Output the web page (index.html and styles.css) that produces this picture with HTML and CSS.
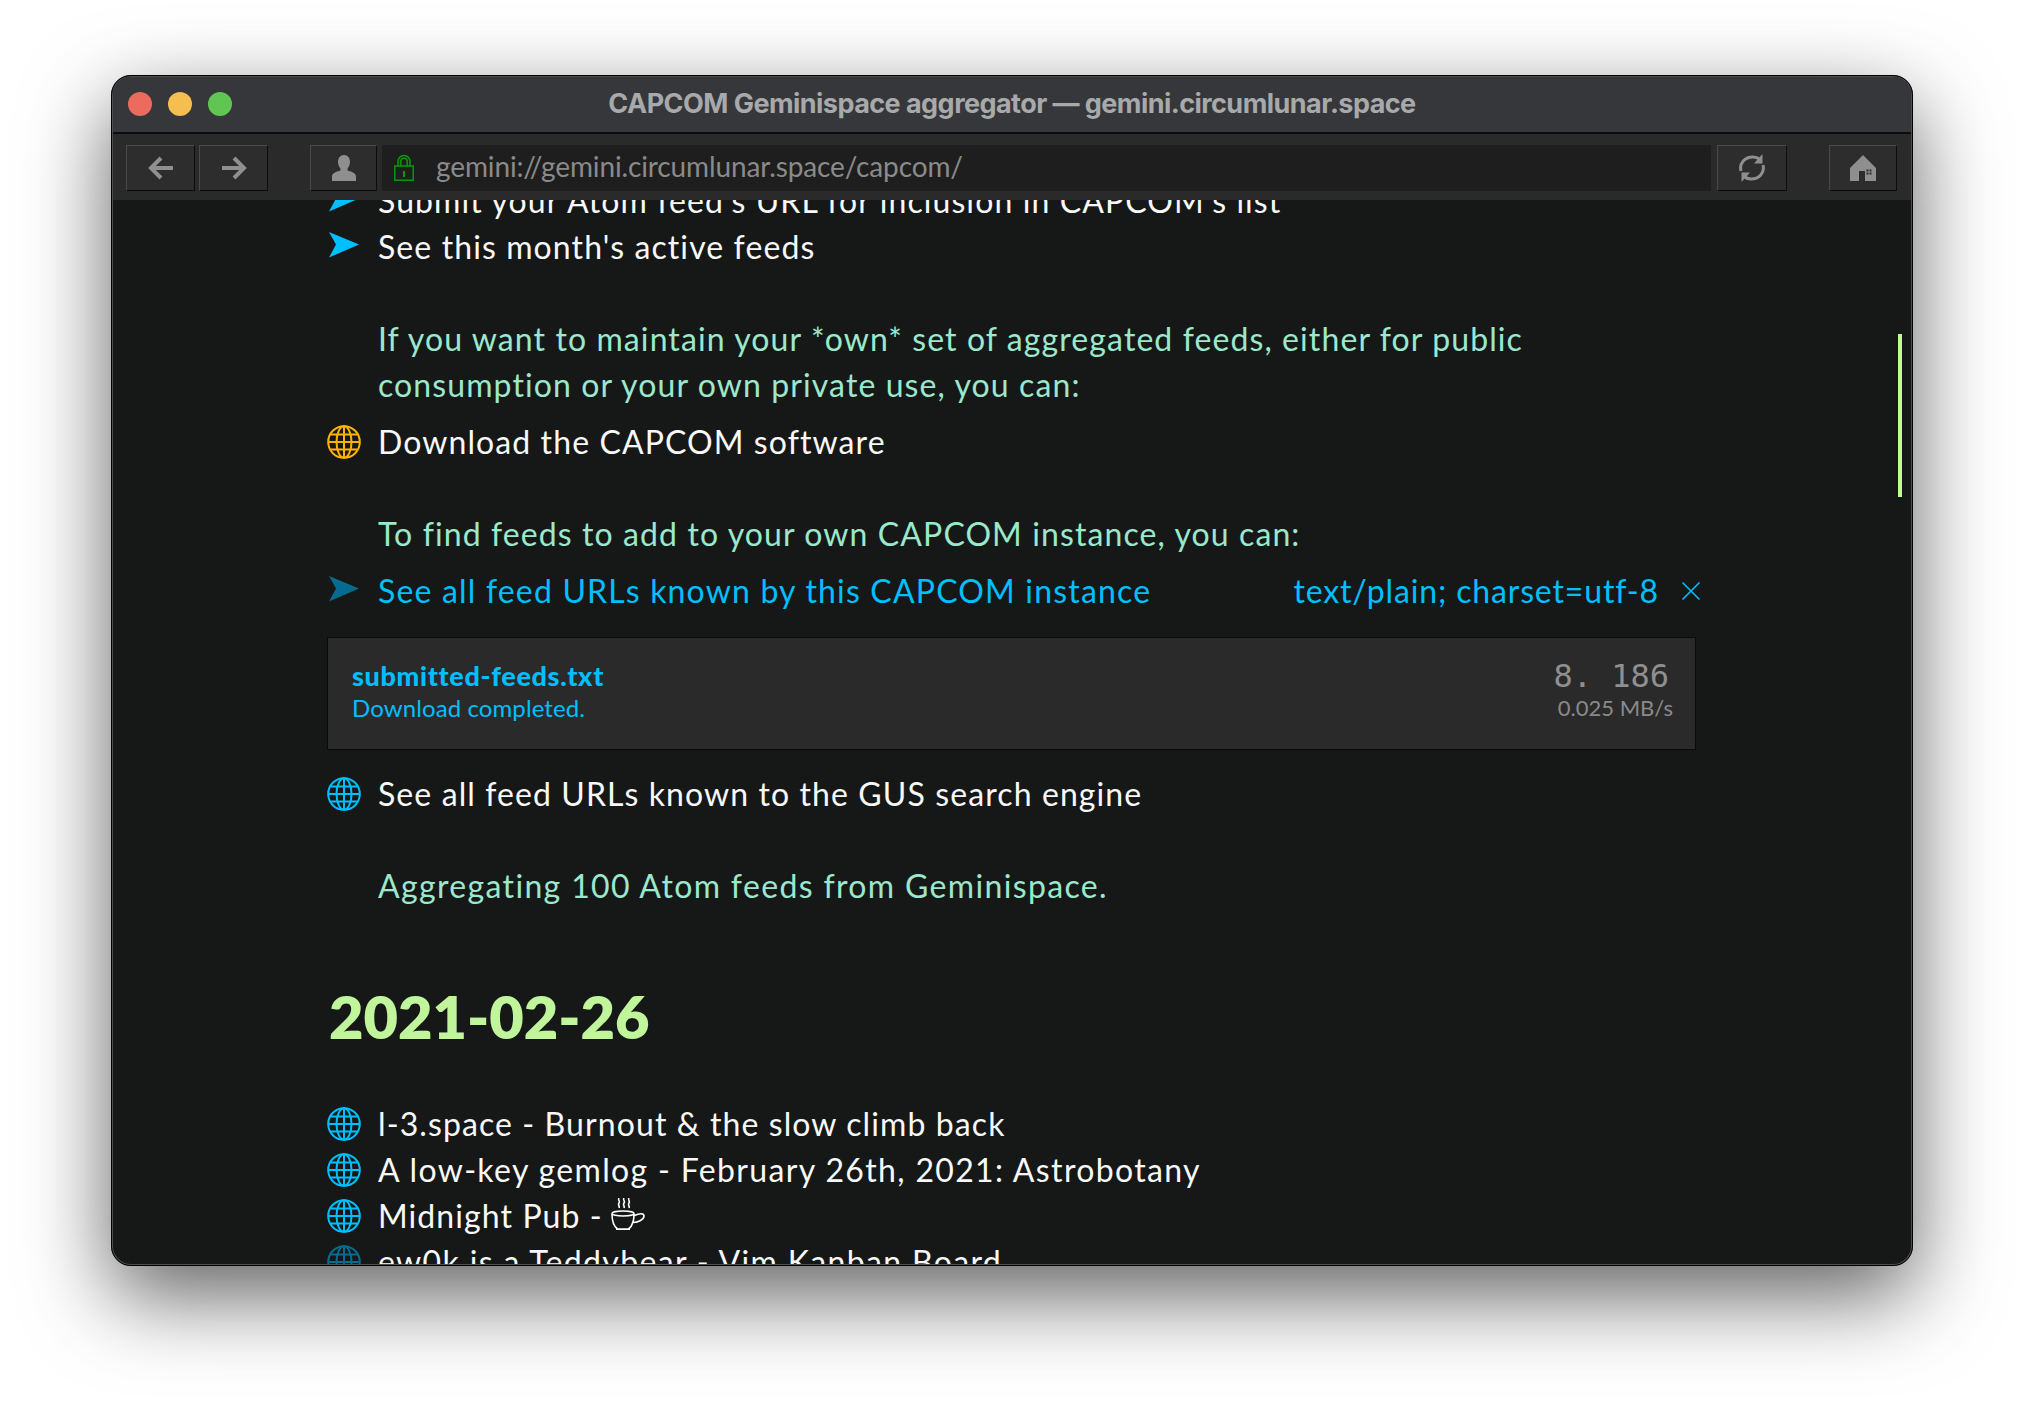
FILE: index.html
```html
<!DOCTYPE html>
<html lang="en">
<head>
<meta charset="utf-8">
<title>CAPCOM Geminispace aggregator — gemini.circumlunar.space</title>
<link rel="stylesheet" href="styles.css">
</head>
<body>
<svg class="defs" width="0" height="0" aria-hidden="true">
  <symbol id="globe" viewBox="0 0 34 34">
    <g fill="none" stroke="currentColor" stroke-width="2">
      <circle cx="17" cy="17" r="15.8"/>
      <ellipse cx="17" cy="17" rx="7.5" ry="15.8"/>
      <path d="M17 1v32M1.2 17h31.6M3.6 9.5h26.8M3.6 24.5h26.8"/>
    </g>
  </symbol>
  <symbol id="plane" viewBox="0 0 30 26">
    <path fill="currentColor" d="M0 0 30 12.5 0 25.5 7 12.5Z"/>
  </symbol>
</svg>
<div class="window">
  <header class="titlebar">
    <div class="lights"><i class="light red"></i><i class="light yellow"></i><i class="light green"></i></div>
    <div class="title">CAPCOM Geminispace aggregator — gemini.circumlunar.space</div>
  </header>
  <nav class="toolbar">
    <div class="btn nav-btn"><svg width="26" height="24" viewBox="0 0 26 24"><path fill="none" stroke="#8f8f8f" stroke-width="4" d="M25 12H4M13 2 3 12l10 10"/></svg></div>
    <div class="btn nav-btn"><svg width="26" height="24" viewBox="0 0 26 24"><path fill="none" stroke="#8f8f8f" stroke-width="4" d="M1 12h21M13 2l10 10-10 10"/></svg></div>
    <div class="btn id-btn"><svg width="24" height="26" viewBox="0 0 24 26"><path fill="#8f8f8f" d="M12 0c3.800 0 6 3 6 6.800 0 3-1 5-2.400 6.500v2.200c3 1 8.400 2.200 8.400 6V26H0v-4.500c0-3.800 5.400-5 8.400-6v-2.200C7 11.800 6 9.800 6 6.800 6 3 8.200 0 12 0Z"/></svg></div>
    <div class="address">
      <svg width="20" height="26" viewBox="0 0 20 26"><g fill="none" stroke="#0a9a0a" stroke-width="1.500"><rect x=".8" y="11" width="18.400" height="14.200"/><path d="M4 11V6.500a6 6 0 0 1 12 0V11M6.800 11V6.500a3.200 3.200 0 0 1 6.400 0V11"/></g><path fill="#0a9a0a" d="M9 16h2v6H9z"/></svg>
      <span class="url">gemini://gemini.circumlunar.space/capcom/</span>
    </div>
    <div class="btn reload-btn"><svg width="28" height="28" viewBox="0 0 28 28"><g fill="none" stroke="#8f8f8f" stroke-width="3"><path d="M3 17C1 9 7 3 15 3c3 0 5 .8 7 2.500"/><path d="M25 11c2 8-4 14-12 14-3 0-5-.8-7-2.500"/></g><path fill="#8f8f8f" d="M24.500 0v9.500H16zM3.500 28v-9.500H12z"/></svg></div>
    <div class="btn home-btn"><svg width="26" height="26" viewBox="0 0 26 26"><path fill="#8f8f8f" d="M13 0 26 13v13H15V16H9v10H0V13Z"/><path fill="#2d2d2d" d="M16.500 14.500h2v2h-2zM19.500 14.500h2v2h-2zM16.500 17.500h2v2h-2zM19.500 17.500h2v2h-2z"/></svg></div>
  </nav>
  <main class="content">
    <div class="doc">
      <div class="row"><svg class="ic plane link"><use href="#plane"/></svg><span>Submit your Atom feed's URL for inclusion in CAPCOM's list</span></div>
      <div class="row"><svg class="ic plane link"><use href="#plane"/></svg><span>See this month's active feeds</span></div>
      <div class="blank"></div>
      <p class="para">If you want to maintain your *own* set of aggregated feeds, either for public<br>consumption or your own private use, you can:</p>
      <div class="row gap"><svg class="ic globe gold"><use href="#globe"/></svg><span>Download the CAPCOM software</span></div>
      <div class="blank"></div>
      <p class="para">To find feeds to add to your own CAPCOM instance, you can:</p>
      <div class="row gap active">
        <svg class="ic plane dim"><use href="#plane"/></svg>
        <span class="grow">See all feed URLs known by this CAPCOM instance</span>
        <span class="mime">text/plain; charset=utf-8</span>
        <svg class="close" width="20" height="20" viewBox="0 0 20 20"><path fill="none" stroke="currentColor" stroke-width="1.600" d="M1.500 1.500l17 17M18.500 1.500l-17 17"/></svg>
      </div>
      <section class="download">
        <div class="dl-left">
          <div class="dl-name">submitted-feeds.txt</div>
          <div class="dl-status">Download completed.</div>
        </div>
        <div class="dl-right">
          <div class="dl-size">8. 186</div>
          <div class="dl-speed">0.025 MB/s</div>
        </div>
      </section>
      <div class="row after-box"><svg class="ic globe link"><use href="#globe"/></svg><span>See all feed URLs known to the GUS search engine</span></div>
      <div class="blank"></div>
      <p class="para wide">Aggregating 100 Atom feeds from Geminispace.</p>
      <h1 class="date">2021-02-26</h1>
      <div class="row"><svg class="ic globe link"><use href="#globe"/></svg><span>l-3.space - Burnout &amp; the slow climb back</span></div>
      <div class="row"><svg class="ic globe link"><use href="#globe"/></svg><span class="wide">A low-key gemlog - February 26th, 2021: Astrobotany</span></div>
      <div class="row"><svg class="ic globe link"><use href="#globe"/></svg><span>Midnight Pub - </span><svg class="coffee" width="34" height="32" viewBox="0 0 34 32"><g fill="none" stroke="#fff" stroke-width="1.600"><path d="M8 0c-1.500 2 1.500 3 0 5s1 3 0 5M13 0c-1.500 2 1.500 3 0 5s1 3 0 5M18 0c-1.500 2 1.500 3 0 5s1 3 0 5"/><ellipse cx="12" cy="15.500" rx="11" ry="2.500"/><path d="M1 16c0 6 1.500 12 5.500 15h11c2-1.500 3.500-3.500 4.300-6.500M23 16c0 3-.3 6-1.200 8.500 4.500 0 11.200-2.500 11.200-6.500 0-3-4.500-3-9.500-.5M5 31.500h14"/></g></svg></div>
      <div class="row"><svg class="ic globe dim"><use href="#globe"/></svg><span class="wide">ew0k is a Teddybear - Vim Kanban Board</span></div>
    </div>
    <div class="scrollbar"></div>
  </main>
</div>
</body>
</html>
```
FILE: styles.css
```css
* { box-sizing: border-box; }
html, body { margin: 0; height: 100%; background: #fff; overflow: hidden; }
body { padding: 75px 0 0 111px; font-family: "Lato", "Noto Sans", sans-serif; }
.defs { position: absolute; }

.window {
  width: 1802px;
  height: 1191px;
  display: flex;
  flex-direction: column;
  border-radius: 20px;
  border: 2px solid #4e4e50;
  outline: 1px solid #000;
  outline-offset: -1px;
  background: #161818;
  box-shadow: 0 30px 85px rgba(0, 0, 0, .62);
  overflow: hidden;
}

.titlebar {
  height: 57px;
  flex: none;
  display: flex;
  align-items: center;
  justify-content: center;
  position: relative;
  background: #36373a;
  border-bottom: 2px solid #0c0c0c;
  padding-bottom: 3px;
}
.lights { position: absolute; left: 15px; top: 15px; display: flex; gap: 16px; }
.light { display: block; width: 24px; height: 24px; border-radius: 50%; }
.red { background: #ed6a5e; }
.yellow { background: #f4bf4f; }
.green { background: #61c554; }
.title { font: 700 27px "Inter", sans-serif; color: #a8a9aa; letter-spacing: -.55px; }

.toolbar {
  height: 66px;
  flex: none;
  display: flex;
  align-items: flex-start;
  padding: 11px 14px 0 13px;
  background: #2a2a2b;
}
.btn {
  height: 46px;
  flex: none;
  display: flex;
  align-items: center;
  justify-content: center;
  background: #2d2d2d;
  border: 1px solid;
  border-color: #4a4a4a #0c0c0c #0c0c0c #4a4a4a;
}
.nav-btn { width: 69px; margin-right: 4px; }
.id-btn { width: 67px; margin-left: 38px; }
.address {
  flex: 1;
  height: 46px;
  margin: 0 6px 0 5px;
  display: flex;
  align-items: center;
  gap: 22px;
  padding-left: 12px;
  background: #1e1e1e;
}
.url { font-size: 28px; color: #8a8a8a; letter-spacing: -.12px; margin-top: -5px; }
.reload-btn { width: 70px; margin-right: 42px; }
.home-btn { width: 68px; }

.content { flex: 1; min-height: 0; position: relative; overflow: hidden; color: #f8f8f8; }
.doc { width: 1369px; margin: -22px 0 0 214px; font-size: 32px; line-height: 46px; letter-spacing: 1.1px; }
.row { display: flex; align-items: center; height: 46px; }
.ic { flex: none; width: 34px; height: 34px; margin-right: 17px; }
.plane { width: 30px; height: 26px; margin: -4px 19px 0 2px; }
.link { color: #00bfff; }
.gold { color: #ffb300; }
.dim { color: #056c8f; }
.blank { height: 46px; }
.para { margin: 0 0 0 51px; color: #9be8cc; }
.wide { letter-spacing: 1.35px; }
.gap { margin-top: 11px; }
.active { color: #00bfff; letter-spacing: 1.18px; }
.grow { flex: 1; }
.mime { letter-spacing: .85px; }
.close { margin: 0 -5px 0 22px; }
.coffee { margin: -4px 0 0 8px; }

.download {
  height: 113px;
  margin-top: 23px;
  padding: 0 22px 6px 24px;
  display: flex;
  align-items: center;
  justify-content: space-between;
  background: #2a2a2a;
  border: 1px solid #0a0a0a;
  letter-spacing: 0;
}
.dl-name { font-size: 27px; line-height: 34px; font-weight: 900; letter-spacing: .65px; color: #00bfff; }
.dl-status { font-size: 24px; line-height: 30px; letter-spacing: .1px; color: #00bfff; }
.dl-right { text-align: right; }
.dl-size { font: 32px/34px "DejaVu Sans Mono", monospace; margin-right: 4px; color: #8f8f8f; }
.dl-speed { font-size: 22px; line-height: 30px; color: #8a8a8a; }
.after-box { margin-top: 21px; }

.date { margin: 77px 0 55px 2px; font-size: 59.5px; line-height: 60px; font-weight: 800; letter-spacing: 0; color: #c0f59c; }

.scrollbar { position: absolute; left: 1785px; top: 134px; width: 4px; height: 163px; background: #c0ff8f; }
```
